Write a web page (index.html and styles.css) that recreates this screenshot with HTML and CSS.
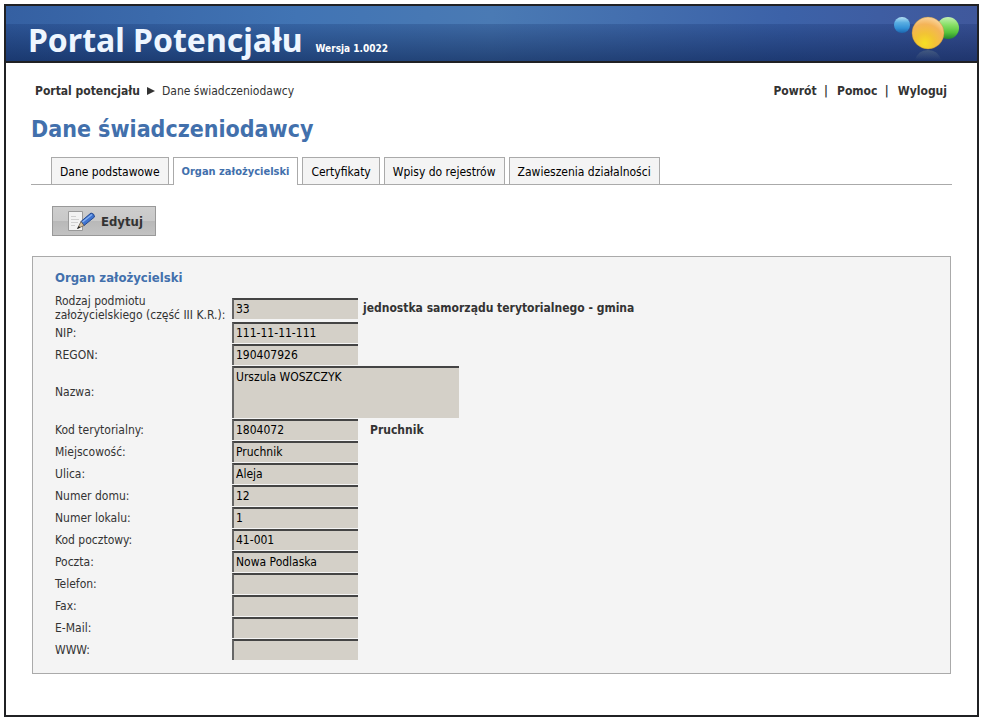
FILE: index.html
```html
<!DOCTYPE html>
<html lang="pl">
<head>
    <meta charset="UTF-8">
    <meta name="viewport" content="width=device-width, initial-scale=1.0">
    <title>Portal Potencjału</title>
    <link rel="stylesheet" href="styles.css">
</head>
<body>
    <div class="page">
        <header class="banner">
            <div class="brand">
                <span class="name">Portal Potencjału</span>
                <span class="version">Wersja 1.0022</span>
            </div>
            <svg class="balls" width="68" height="48" viewBox="0 0 68 48" aria-hidden="true">
                <defs>
                    <linearGradient id="blue" x1="0" y1="0" x2="0" y2="1">
                        <stop offset="0" stop-color="#b4e0f4"/>
                        <stop offset="0.35" stop-color="#5aaee2"/>
                        <stop offset="0.7" stop-color="#3290d6"/>
                        <stop offset="1" stop-color="#1c64ac"/>
                    </linearGradient>
                    <linearGradient id="green" x1="0" y1="0" x2="0" y2="1">
                        <stop offset="0" stop-color="#c4f0b4"/>
                        <stop offset="0.35" stop-color="#8ae068"/>
                        <stop offset="0.7" stop-color="#56c43c"/>
                        <stop offset="1" stop-color="#24862c"/>
                    </linearGradient>
                    <radialGradient id="yellow" cx="40%" cy="82%" r="85%">
                        <stop offset="0" stop-color="#f6e024"/>
                        <stop offset="0.35" stop-color="#f2c434"/>
                        <stop offset="0.7" stop-color="#f4b458"/>
                        <stop offset="1" stop-color="#fad8a4"/>
                    </radialGradient>
                    <linearGradient id="shade" x1="0" y1="0" x2="0" y2="1">
                        <stop offset="0" stop-color="#5f7488" stop-opacity="0.5"/>
                        <stop offset="1" stop-color="#5f7488" stop-opacity="0"/>
                    </linearGradient>
                </defs>
                <path d="M23 47Q26 37 36 37Q46 37 49 47Z" fill="url(#shade)"/>
                <circle cx="10" cy="12" r="8" fill="url(#blue)"/>
                <circle cx="56" cy="15" r="11" fill="url(#green)"/>
                <circle cx="36" cy="20" r="16" fill="url(#yellow)" stroke="#b98a2c" stroke-opacity="0.4"/>
            </svg>
        </header>

        <main>
            <div class="topline">
                <nav class="crumbs">
                    <a href="#">Portal potencjału</a>
                    <svg width="8" height="8" viewBox="0 0 8 8" aria-hidden="true"><path d="M0 0L8 4L0 8Z" fill="#333"/></svg>
                    <span>Dane świadczeniodawcy</span>
                </nav>
                <nav class="links">
                    <a href="#">Powrót</a>
                    <a href="#">Pomoc</a>
                    <a href="#">Wyloguj</a>
                </nav>
            </div>

            <h1>Dane świadczeniodawcy</h1>

            <nav class="tabs">
                <a href="#">Dane podstawowe</a>
                <a href="#" class="active">Organ założycielski</a>
                <a href="#">Certyfikaty</a>
                <a href="#">Wpisy do rejestrów</a>
                <a href="#">Zawieszenia działalności</a>
            </nav>

            <button type="button" class="edit">
                <svg width="28" height="22" viewBox="0 0 28 22" aria-hidden="true">
                    <path d="M1.500 1.500H15.500V20.500H1.500Z" fill="#f2f2f2" stroke="#999"/>
                    <path d="M4 6.500H9M4 9.500H12M4 12.500H11M4 15.500H8" stroke="#cfcfcf"/>
                    <path d="M14 11.500L24 3Q27.500 3.500 27.500 7L17 15.500Z" fill="#3f74d0" stroke="#24488f"/>
                    <path d="M15.500 12L25 4.500" stroke="#86b0f0" stroke-width="1.500"/>
                    <path d="M14 11.500L17 15.500L10.500 18.500Z" fill="#d8c09c" stroke="#5a5248" stroke-width="0.700"/>
                    <path d="M11.800 16L13.500 17.500L10 19Z" fill="#222"/>
                </svg>
                Edytuj
            </button>

            <form class="panel">
                <h2>Organ założycielski</h2>
                <div class="row first">
                    <label for="rodzaj">Rodzaj podmiotu założycielskiego (część III K.R.):</label>
                    <input type="text" id="rodzaj" value="33" readonly>
                    <b>jednostka samorządu terytorialnego - gmina</b>
                </div>
                <div class="row">
                    <label for="nip">NIP:</label>
                    <input type="text" id="nip" value="111-11-11-111" readonly>
                </div>
                <div class="row">
                    <label for="regon">REGON:</label>
                    <input type="text" id="regon" value="190407926" readonly>
                </div>
                <div class="row">
                    <label for="nazwa">Nazwa:</label>
                    <textarea id="nazwa" readonly>Urszula WOSZCZYK</textarea>
                </div>
                <div class="row">
                    <label for="teryt">Kod terytorialny:</label>
                    <input type="text" id="teryt" value="1804072" readonly>
                    <b class="place">Pruchnik</b>
                </div>
                <div class="row">
                    <label for="miejsc">Miejscowość:</label>
                    <input type="text" id="miejsc" value="Pruchnik" readonly>
                </div>
                <div class="row">
                    <label for="ulica">Ulica:</label>
                    <input type="text" id="ulica" value="Aleja" readonly>
                </div>
                <div class="row">
                    <label for="dom">Numer domu:</label>
                    <input type="text" id="dom" value="12" readonly>
                </div>
                <div class="row">
                    <label for="lokal">Numer lokalu:</label>
                    <input type="text" id="lokal" value="1" readonly>
                </div>
                <div class="row">
                    <label for="kod">Kod pocztowy:</label>
                    <input type="text" id="kod" value="41-001" readonly>
                </div>
                <div class="row">
                    <label for="poczta">Poczta:</label>
                    <input type="text" id="poczta" value="Nowa Podlaska" readonly>
                </div>
                <div class="row">
                    <label for="telefon">Telefon:</label>
                    <input type="text" id="telefon" readonly>
                </div>
                <div class="row">
                    <label for="fax">Fax:</label>
                    <input type="text" id="fax" readonly>
                </div>
                <div class="row">
                    <label for="email">E-Mail:</label>
                    <input type="text" id="email" readonly>
                </div>
                <div class="row">
                    <label for="www">WWW:</label>
                    <input type="text" id="www" readonly>
                </div>
            </form>
        </main>
    </div>
</body>
</html>
```

FILE: styles.css
```css
* {
    box-sizing: border-box;
}
body {
    margin: 0;
    padding: 4px 2px 2px 4px;
    min-height: 100vh;
    display: flex;
    background: #fff;
    color: #333;
    font-family: Tahoma, "DejaVu Sans Condensed", "DejaVu Sans", sans-serif;
    font-size: 12px;
}
a {
    color: inherit;
    text-decoration: none;
}
.page {
    flex: 1;
    border: 2px solid #202124;
}

/* banner */
.banner {
    display: flex;
    justify-content: space-between;
    height: 57px;
    padding: 0 17px 0 22px;
    border-bottom: 2px solid #202124;
    background:
        linear-gradient(to bottom, transparent 18px, rgba(8, 32, 90, 0.2) 18px, rgba(4, 24, 70, 0.55)),
        linear-gradient(to right, #3560a2, #4174b4 30%, #4a7ab4 50%, #3c62a8 80%, #40589c);
}
.brand {
    display: flex;
    align-items: baseline;
    gap: 13px;
    color: #fff;
    font-weight: bold;
}
.name {
    color: #eef6ff;
    font-family: "Trebuchet MS", "Noto Sans", sans-serif;
    font-size: 32px;
    line-height: 68px;
}
.version {
    font-family: "Trebuchet MS", "DejaVu Sans Condensed", sans-serif;
    font-size: 10px;
}
.balls {
    margin-top: 7px;
}

main {
    padding: 20px 25px 40px;
}
.topline {
    display: flex;
    justify-content: space-between;
    padding: 0 5px 0 4px;
    line-height: 16px;
}
.crumbs {
    display: flex;
    align-items: center;
    gap: 7px;
}
.crumbs a,
.links a {
    font-weight: bold;
}
.links a + a::before {
    content: "|";
    margin: 0 9px 0 4px;
}
h1 {
    margin: 17px 0 15px;
    color: #4270ac;
    font-family: Verdana, "DejaVu Sans Condensed", sans-serif;
    font-size: 23px;
    line-height: 26px;
}

/* tabs */
.tabs {
    display: flex;
    gap: 4px;
    padding-left: 20px;
    border-bottom: 1px solid #aaa;
}
.tabs a {
    height: 27px;
    padding: 0 8px;
    border: 1px solid #aaa;
    border-bottom: 0;
    background: #f4f4f4;
    color: #000;
    line-height: 28px;
    white-space: nowrap;
}
.tabs a.active {
    height: 28px;
    margin-bottom: -1px;
    background: #fff;
    color: #4270ac;
    font-size: 11px;
    font-weight: bold;
}

.edit {
    display: flex;
    align-items: center;
    gap: 6px;
    height: 30px;
    margin: 21px 0 20px 21px;
    padding: 0 12px 0 14px;
    border: 1px solid #999;
    background: linear-gradient(to bottom, #cecece, #c8c8c8 50%, #b8b8b8 50%, #c2c2c2);
    color: #333;
    font: bold 13px Tahoma, "DejaVu Sans Condensed", sans-serif;
}

/* form */
.panel {
    margin: 0 1px;
    padding: 12px 22px;
    border: 1px solid #aaa;
    background: #f4f4f4;
}
.panel h2 {
    margin: 0 0 8px;
    color: #4270ac;
    font-size: 13px;
    line-height: 17px;
}
.row {
    display: flex;
    align-items: center;
    margin-bottom: 1px;
}
.row.first {
    margin-bottom: 0;
}
.row label {
    flex: 0 0 177px;
    line-height: 14px;
}
.row b {
    margin-left: 5px;
}
.row .place {
    margin-left: 12px;
}
.row input,
.row textarea {
    width: 126px;
    height: 21px;
    margin: 0;
    padding: 0 2px 1px;
    border: solid #444;
    border-width: 2px 0 0 2px;
    border-left-color: #666;
    background: #d4d0c8;
    color: #000;
    font: inherit;
    outline: none;
}
.row textarea {
    width: 227px;
    height: 52px;
    padding-top: 2px;
    resize: none;
}
```
